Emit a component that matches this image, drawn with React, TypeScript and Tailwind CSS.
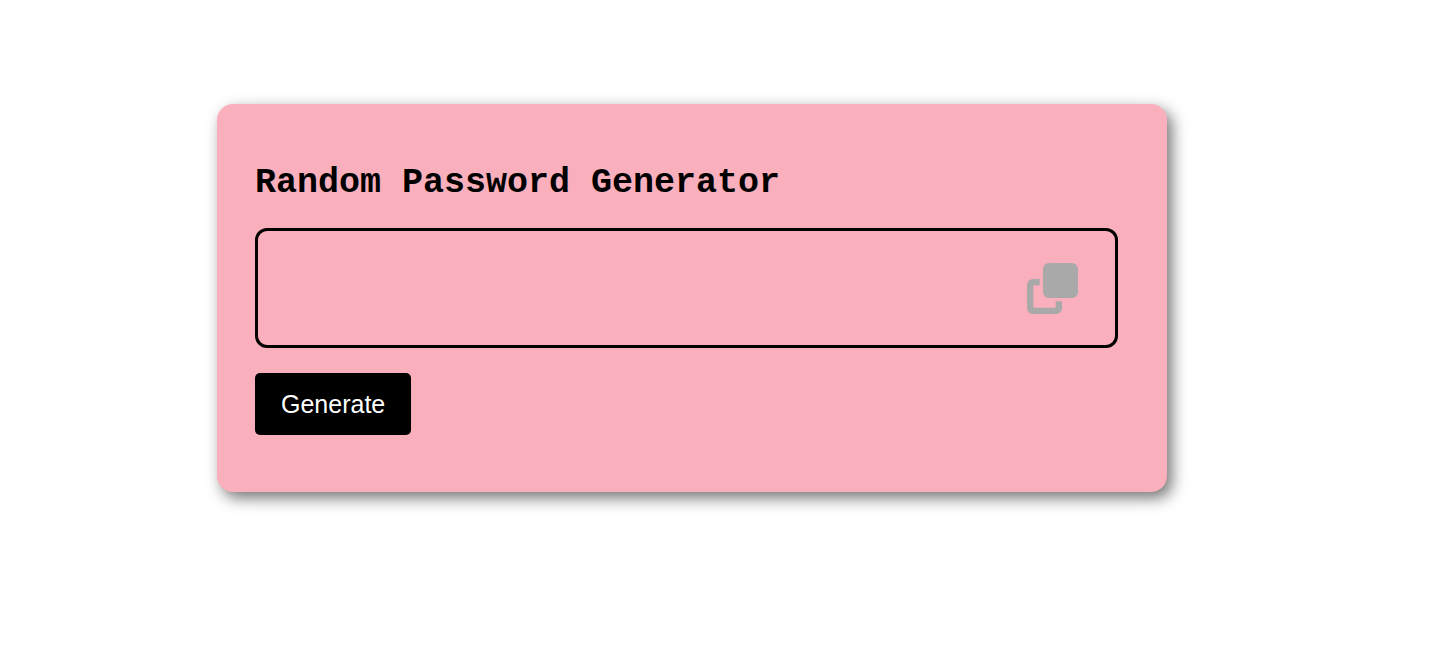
import { useState } from "react";

const CHARACTERS = "ABCDEFGHIJKLMNOPQRSTUVWXYZabcdefghijklmnopqrstuvwxyz0123456789@#$%^&*()_+~|}{[]></-=";

function CopyIcon() {
  return (
    <svg viewBox="0 0 512 512" className="size-[51px]" fill="currentColor" aria-hidden="true">
      <path d="M224 0c-35.300 0-64 28.700-64 64V288c0 35.300 28.700 64 64 64H448c35.300 0 64-28.700 64-64V64c0-35.300-28.700-64-64-64H224z" />
      <path d="M64 160c-35.300 0-64 28.700-64 64V448c0 35.300 28.700 64 64 64H288c35.300 0 64-28.700 64-64V384H288v64H64V224h64V160H64z" />
    </svg>
  );
}

export default function App() {
  const [password, setPassword] = useState("");

  const generate = () => {
    const values = crypto.getRandomValues(new Uint32Array(12));
    setPassword(Array.from(values, (v) => CHARACTERS[v % CHARACTERS.length]).join(""));
  };

  return (
    <main className="min-h-screen bg-white pt-26 pr-12 pl-[217px] font-['Liberation_Sans',Arial,sans-serif]">
      <section className="w-full max-w-[950px] rounded-2xl bg-[#faafbc] pt-14 pr-[49px] pb-[57px] pl-[38px] shadow-[5px_6px_15px_rgba(0,0,0,0.55)]">
        <h1 className="mb-[22px] font-['Courier_New','Liberation_Mono',monospace] text-[35px] leading-[46px] font-bold text-black">
          Random Password Generator
        </h1>
        <div className="mb-[25px] flex h-30 items-center rounded-xl border-3 border-black pr-[37px] pl-6">
          <input
            type="text"
            aria-label="Password"
            value={password}
            readOnly
            className="min-w-0 flex-1 bg-transparent text-3xl outline-none"
          />
          <button
            type="button"
            aria-label="Copy password"
            className="text-[#a9a9a9]"
            onClick={() => navigator.clipboard?.writeText(password)}
          >
            <CopyIcon />
          </button>
        </div>
        <button
          type="button"
          onClick={generate}
          className="block h-[62px] rounded-[5px] bg-black px-[26px] pt-0.5 text-[25px] text-white"
        >
          Generate
        </button>
      </section>
    </main>
  );
}
